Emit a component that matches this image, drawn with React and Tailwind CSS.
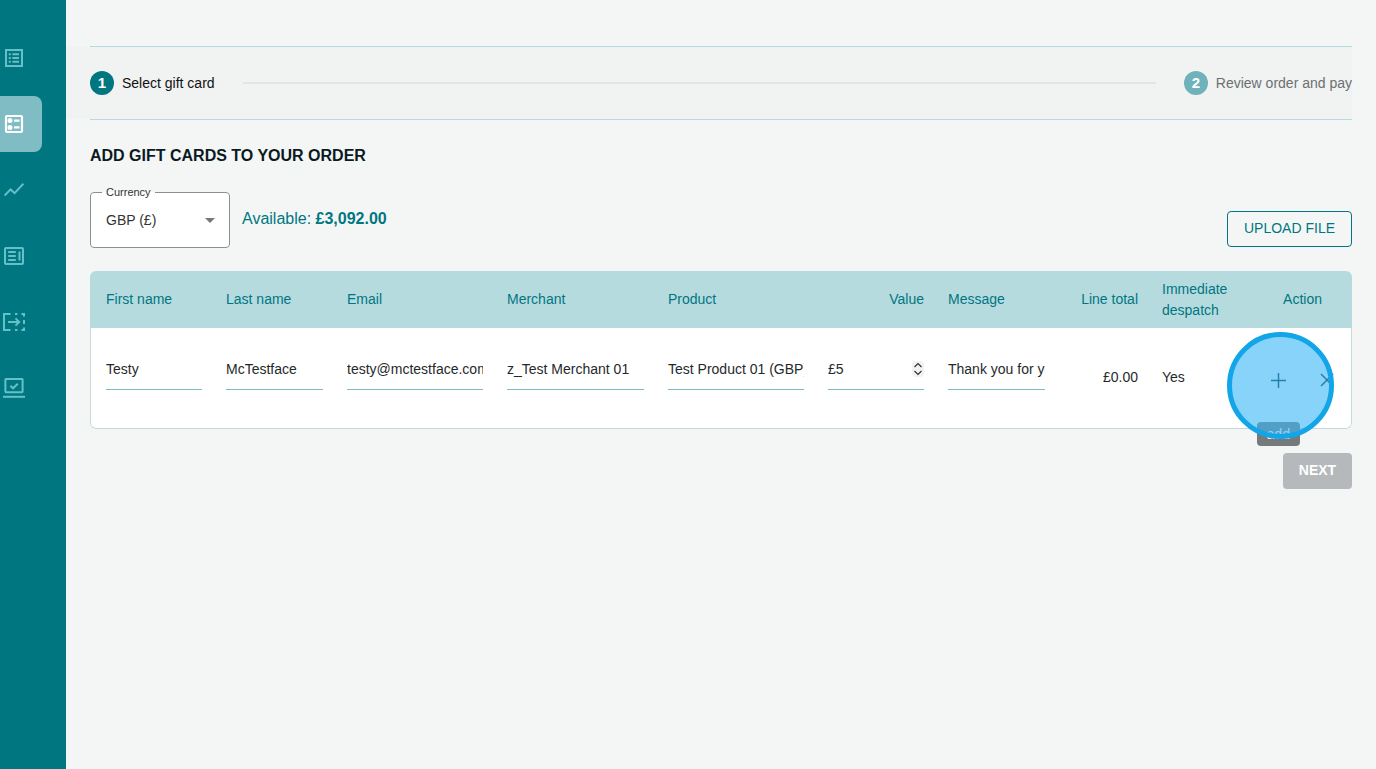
const NAV_ICONS = [
  // list in a box
  <svg key="list" width="20" height="20" viewBox="0 0 20 20" fill="none" stroke="currentColor" strokeWidth="2">
    <rect x="2" y="2" width="16" height="16" />
    <path d="M8.4 6.2h6.6M8.4 10h6.6M8.4 13.8h6.6M4.8 6.2h2M4.8 10h2M4.8 13.8h2" />
  </svg>,
  // checklist card
  <svg key="card" width="20" height="20" viewBox="0 0 20 20" fill="none" stroke="currentColor" strokeWidth="2.2">
    <rect x="2" y="2" width="16" height="16" rx="1" />
    <path d="M10 6.6h5.5M10 13.4h5.5" />
    <circle cx="6" cy="6.6" r="1.4" fill="currentColor" />
    <circle cx="6" cy="13.4" r="1.4" fill="currentColor" />
  </svg>,
  // trend line
  <svg key="chart" width="20" height="14" viewBox="0 0 20 14" fill="none" stroke="currentColor" strokeWidth="2">
    <path d="M0.6 12.6 6.6 6.4l4 3.8L19.4 0.8" />
  </svg>,
  // split panel
  <svg key="split" width="20" height="18" viewBox="0 0 20 18" fill="none" stroke="currentColor" strokeWidth="2">
    <rect x="1" y="1" width="18" height="16" rx="1" />
    <path d="M4.2 5h7.6M4.2 9h7.6M4.2 13h7.6M15.5 4.4v9.2" />
  </svg>,
  // dashed frame with arrow
  <svg key="move" width="22" height="18" viewBox="0 0 22 18" fill="none" stroke="currentColor" strokeWidth="2">
    <path d="M7.5 1H1v16h6.5" />
    <path d="M12 1h2.4M18.5 1H21v2.5M21 7v4M21 14.5V17h-2.5M14.4 17H12" />
    <path d="M5 9h11M12.5 5.4 16.2 9l-3.7 3.6" />
  </svg>,
  // laptop with check
  <svg key="laptop" width="22" height="20" viewBox="0 0 22 20" fill="none" stroke="currentColor" strokeWidth="2">
    <rect x="2.4" y="1" width="17.2" height="13.2" rx="0.6" />
    <path d="M0 18.8h22" />
    <path d="M7.4 7.8l2.6 2.5 4.8-4.6" />
  </svg>,
]

const COLUMNS = [
  { label: 'First name' },
  { label: 'Last name' },
  { label: 'Email' },
  { label: 'Merchant' },
  { label: 'Product' },
  { label: 'Value', right: true },
  { label: 'Message' },
  { label: 'Line total', right: true },
]

const GRID = 'grid grid-cols-[96px_97px_136px_137px_136px_96px_97px_69px_41px_1fr] gap-x-6'

function Field({ value, children }) {
  return (
    <div className="mb-[18px] flex h-[41px] items-center justify-between overflow-hidden border-b border-[#7dbcc3] text-sm text-[#1f2a2c]">
      <span className="whitespace-nowrap">{value}</span>
      {children}
    </div>
  )
}

export default function App() {
  return (
    <div className="relative flex min-h-[769px] bg-[#f4f6f6] font-['Liberation_Sans',sans-serif]">
      {/* Sidebar */}
      <aside className="flex w-[66px] shrink-0 flex-col gap-[10px] bg-[#007681] pt-[30px] pr-6">
        {NAV_ICONS.map((icon, i) => (
          <div
            key={i}
            className={`flex h-[56px] items-center justify-center pr-[14px] ${i === 1 ? 'rounded-r-lg bg-[#7fbcc3] text-white' : 'text-[#66c0c7]'}`}
          >
            {icon}
          </div>
        ))}
      </aside>

      {/* Main */}
      <main className="min-w-0 flex-1 px-6 pt-[46px]">
        <div className="h-px bg-[#b5dbe0]" />
        <div className="-ml-6 flex h-[72px] items-center bg-[#f1f2f2] pl-6">
          <span className="flex h-6 w-6 items-center justify-center rounded-full bg-[#007681] text-[15px] font-bold text-white">1</span>
          <span className="ml-2 text-sm text-[#111]">Select gift card</span>
          <div className="mx-7 h-0.5 flex-1 bg-[#e1e5e5]" />
          <span className="flex h-6 w-6 items-center justify-center rounded-full bg-[#6fb2bb] text-[15px] font-bold text-white">2</span>
          <span className="ml-2 text-sm whitespace-nowrap text-[#6b7070]">Review order and pay</span>
        </div>
        <div className="h-px bg-[#b5dbe0]" />

        <h1 className="mt-[26px] text-base leading-[19px] font-bold text-[#0a1a1e]">ADD GIFT CARDS TO YOUR ORDER</h1>

        <div className="mt-[21px] flex items-start">
          <fieldset className="h-[62px] w-[140px] rounded border border-[#8a8f90] bg-white pr-4 pl-[15px]">
            <legend className="-ml-1 px-1 text-[11px] leading-[12px] text-[#333]">Currency</legend>
            <div className="mt-[12px] flex items-center justify-between text-sm text-[#333]">
              <span>GBP (£)</span>
              <span className="mr-[-2px] h-0 w-0 border-x-[5px] border-t-[5px] border-x-transparent border-t-[#777]" />
            </div>
          </fieldset>
          <p className="mt-[23px] ml-3 text-base leading-[19px] text-[#007681]">
            Available: <span className="font-bold">£3,092.00</span>
          </p>
          <button className="mt-[25px] ml-auto h-9 w-[125px] rounded border border-[#007681] pb-[3px] text-sm text-[#007681]">UPLOAD FILE</button>
        </div>

        {/* Table */}
        <div className="mt-[23px] overflow-hidden rounded-md">
          <div className={`${GRID} h-[57px] items-center bg-[#b6dbdf] px-4 pb-px text-sm text-[#007681]`}>
            {COLUMNS.map(col => (
              <div key={col.label} className={col.right ? 'text-right' : ''}>{col.label}</div>
            ))}
            <div className="w-[70px] pt-[2px] leading-[21px]">Immediate despatch</div>
            <div className="pr-[14px] text-right">Action</div>
          </div>
          <div className={`${GRID} h-[101px] items-center rounded-b-md border-x border-b border-[#c5d9db] bg-white pr-[15px] pl-[15px]`}>
            <Field value="Testy" />
            <Field value="McTestface" />
            <Field value="testy@mctestface.com" />
            <Field value="z_Test Merchant 01" />
            <Field value="Test Product 01 (GBP)" />
            <Field value="£5">
              <span className="rounded bg-[#f1f2f2] text-[#333]">
                <svg className="block" width="12" height="16" viewBox="0 0 12 16" fill="none" stroke="currentColor" strokeWidth="1.2">
                  <path d="M2.5 6 6 2.5 9.5 6M2.5 10 6 13.5 9.5 10" />
                </svg>
              </span>
            </Field>
            <Field value="Thank you for your order" />
            <div className="mb-[2px] text-right text-sm text-[#1f2a2c]">£0.00</div>
            <div className="mb-[2px] text-sm text-[#1f2a2c]">Yes</div>
            <div className="mt-1 flex items-center pl-11 text-[#00303a]">
              <svg width="15" height="15" viewBox="0 0 15 15" fill="none" stroke="currentColor" strokeWidth="1.5">
                <path d="M7.5 0v15M0 7.5h15" />
              </svg>
              <svg className="ml-[34px] shrink-0" width="14" height="14" viewBox="0 0 14 14" fill="none" stroke="currentColor" strokeWidth="1.5">
                <path d="M1 1l12 12M13 1 1 13" />
              </svg>
            </div>
          </div>
        </div>

        <div className="mt-6 flex justify-end">
          <button className="h-9 w-[69px] rounded bg-[#b5b9bb] pb-[3px] text-sm font-bold text-white">NEXT</button>
        </div>
      </main>

      {/* Tooltip and click highlight over the add button */}
      <div className="absolute top-[422px] left-[1257px] flex h-6 w-[43px] items-center justify-center rounded-sm bg-[#757b7d] text-sm text-white">add</div>
      <div className="absolute top-[332px] left-[1227px] h-[107px] w-[107px] rounded-full border-[5px] border-[#12a5e8] bg-[#38b6f6]/60" />
    </div>
  )
}
